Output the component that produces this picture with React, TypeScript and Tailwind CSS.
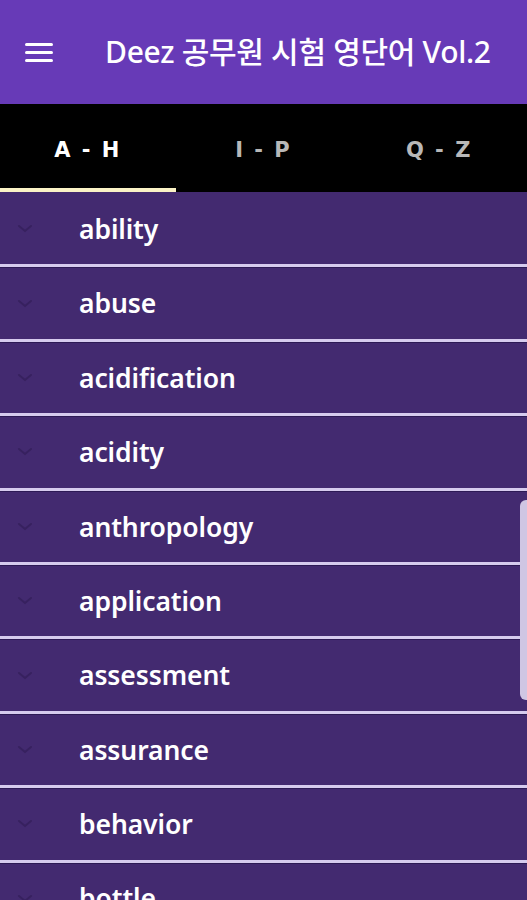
import React from 'react';

const words = [
  'ability',
  'abuse',
  'acidification',
  'acidity',
  'anthropology',
  'application',
  'assessment',
  'assurance',
  'behavior',
  'bottle',
];

const tabs = ['A - H', 'I - P', 'Q - Z'];

function Chevron() {
  return (
    <svg width="16" height="10" viewBox="0 0 16 10" className="shrink-0">
      <path d="M2 2 L8 7 L14 2" fill="none" stroke="#37215f" strokeWidth="2" strokeLinecap="round" />
    </svg>
  );
}

export default function App() {
  return (
    <div
      className="relative w-[527px] h-[900px] overflow-hidden bg-[#432a70]"
      style={{ fontFamily: '"Noto Sans", "Noto Sans CJK KR", sans-serif' }}
    >
      {/* App bar */}
      <div className="h-[104px] bg-[#673ab7] flex items-center pl-[25px]">
        <div className="flex flex-col gap-[5px] w-[28px]">
          <div className="h-[3px] bg-white rounded-sm" />
          <div className="h-[3px] bg-white rounded-sm" />
          <div className="h-[3px] bg-white rounded-sm" />
        </div>
        <div className="ml-[52px] text-white text-[30px] font-medium tracking-[-0.3px] leading-none">
          Deez 공무원 시험 영단어 Vol.2
        </div>
      </div>

      {/* Tabs */}
      <div className="h-[88px] bg-black grid grid-cols-3">
        {tabs.map((t, i) => (
          <div key={t} className="relative flex items-center justify-center pt-[6px]">
            <span
              className={`text-[21px] font-bold tracking-[2px] ${
                i === 0 ? 'text-white' : 'text-[#b8b8b8]'
              }`}
              style={{ fontFamily: '"DejaVu Sans", sans-serif' }}
            >
              {t}
            </span>
            {i === 0 && (
              <div className="absolute left-0 right-0 bottom-0 h-[4px] bg-[#fbf3c6]" />
            )}
          </div>
        ))}
      </div>

      {/* Word list */}
      <div className="flex flex-col pt-[2px]">
        {words.map((w) => (
          <div key={w} className="flex flex-col">
            <div className="h-[70.4px] flex items-center pl-[17px]">
              <Chevron />
              <span className="ml-[46px] text-white text-[26.5px] font-semibold leading-none tracking-[-0.1px]">
                {w}
              </span>
            </div>
            <div className="h-[3px] bg-[#d6cbee]" />
            <div className="h-[1px] bg-[#2d1a55]" />
          </div>
        ))}
      </div>

      {/* Fast scroll thumb */}
      <div className="absolute right-0 top-[500px] w-[7px] h-[200px] rounded-l-[6px] bg-[#cfc6e3]" />
    </div>
  );
}
